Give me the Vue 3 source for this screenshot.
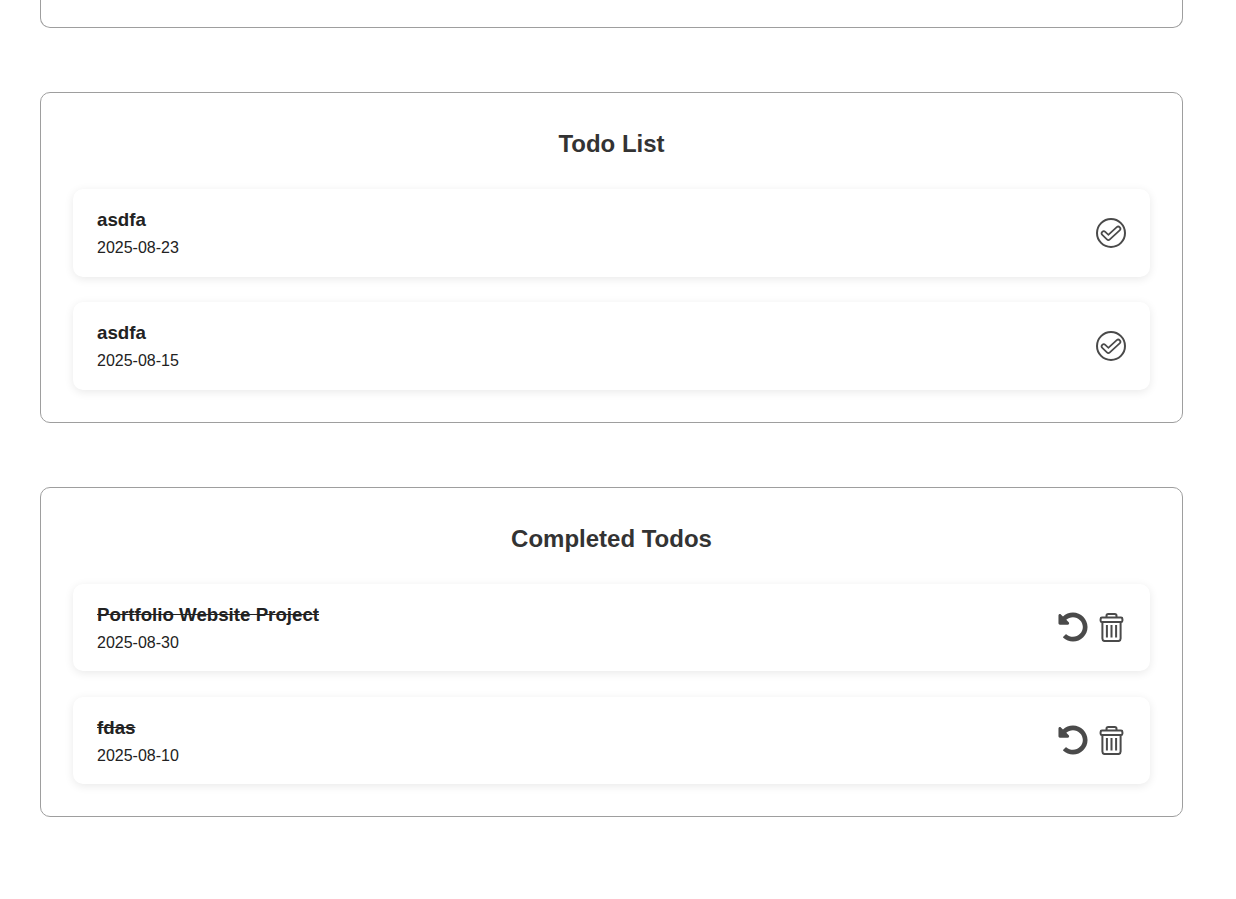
<script setup>
const todos = [
  { id: 1, title: 'asdfa', date: '2025-08-23' },
  { id: 2, title: 'asdfa', date: '2025-08-15' }
]

const completed = [
  { id: 3, title: 'Portfolio Website Project', date: '2025-08-30' },
  { id: 4, title: 'fdas', date: '2025-08-10' }
]
</script>

<template>
  <div class="page">
    <section class="panel panel-cut"></section>

    <section class="panel">
      <h2 class="panel-title">Todo List</h2>
      <ul class="todo-list">
        <li v-for="todo in todos" :key="todo.id" class="todo-item">
          <div class="todo-text">
            <div class="todo-title">{{ todo.title }}</div>
            <div class="todo-date">{{ todo.date }}</div>
          </div>
          <div class="todo-actions">
            <svg width="30" height="30" viewBox="0 0 30 30" fill="none">
              <circle cx="15" cy="15" r="14" stroke="#4a4a4a" stroke-width="2" />
              <path d="M7.8 15.4 12.4 19.8 22.2 10.8" stroke="#4a4a4a" stroke-width="6" stroke-linecap="round" stroke-linejoin="round" />
              <path d="M7.8 15.4 12.4 19.8 22.2 10.8" stroke="#fff" stroke-width="2.6" stroke-linecap="round" stroke-linejoin="round" />
            </svg>
          </div>
        </li>
      </ul>
    </section>

    <section class="panel">
      <h2 class="panel-title">Completed Todos</h2>
      <ul class="todo-list">
        <li v-for="todo in completed" :key="todo.id" class="todo-item">
          <div class="todo-text">
            <div class="todo-title done">{{ todo.title }}</div>
            <div class="todo-date">{{ todo.date }}</div>
          </div>
          <div class="todo-actions">
            <svg width="30" height="30" viewBox="0 0 512 512">
              <path fill="#4a4a4a" d="M255.545 8c-66.269.119-126.438 26.233-170.86 68.685L48.971 40.971C33.851 25.851 8 36.559 8 57.941V192c0 13.255 10.745 24 24 24h134.059c21.382 0 32.09-25.851 16.971-40.971l-41.75-41.75c30.864-28.899 70.801-44.907 113.23-45.273 92.398-.798 170.283 73.977 169.484 169.442C423.236 348.009 349.816 424 256 424c-41.127 0-79.997-14.678-110.63-41.556-4.743-4.161-11.906-3.908-16.368.553L89.34 422.659c-4.872 4.872-4.631 12.815.482 17.433C133.798 479.813 192.074 504 256 504c136.966 0 247.999-111.033 248-247.998C504.001 119.193 392.354 7.755 255.545 8z" />
            </svg>
            <svg width="30" height="30" viewBox="0 0 30 30" fill="none" stroke="#4a4a4a" stroke-width="2">
              <path d="M10.5 5.5V3.8c0-1 .7-1.8 1.7-1.8h6.6c1 0 1.7.8 1.7 1.8v1.7" />
              <rect x="4.6" y="5.5" width="21.8" height="4.6" rx="1.4" />
              <path d="M6.4 10.1v16.4c0 1.6 1 2.6 2.6 2.6h13c1.6 0 2.6-1 2.6-2.6V10.1" />
              <path d="M10.9 13v12.6M15.5 13v12.6M20.1 13v12.6" />
            </svg>
          </div>
        </li>
      </ul>
    </section>
  </div>
</template>

<style>
body {
  background: #fff;
}
</style>

<style scoped>
.page {
  width: 1143px;
  height: 899px;
  margin-left: 40px;
  display: flex;
  flex-direction: column;
  gap: 64px;
  overflow: hidden;
  font-family: "Liberation Sans", Arial, sans-serif;
  color: #222;
}

.panel {
  flex: none;
  box-sizing: border-box;
  border: 1px solid #9e9e9e;
  border-radius: 10px;
  padding: 32px;
}

.panel-cut {
  height: 28px;
  padding: 0;
  border-top: none;
  border-top-left-radius: 0;
  border-top-right-radius: 0;
}

.panel-title {
  margin: 0 0 27px;
  padding-top: 1px;
  height: 36px;
  line-height: 36px;
  font-size: 24px;
  font-weight: 700;
  text-align: center;
  color: #333;
}

.todo-list {
  list-style: none;
  margin: 0;
  padding: 0;
  display: flex;
  flex-direction: column;
  gap: 25.5px;
}

.todo-item {
  box-sizing: border-box;
  height: 87.5px;
  padding: 0 24px;
  display: flex;
  align-items: center;
  justify-content: space-between;
  background: #fff;
  border-radius: 10px;
  box-shadow: 0 2px 10px rgba(0, 0, 0, 0.09);
}

.todo-text {
  padding-top: 2px;
}

.todo-title {
  font-size: 18.72px;
  font-weight: 700;
  line-height: 24px;
  color: #222;
}

.todo-title.done {
  text-decoration: line-through;
}

.todo-date {
  margin-top: 5px;
  font-size: 16px;
  line-height: 22px;
  color: #222;
}

.todo-actions {
  display: flex;
  align-items: center;
  gap: 8px;
}
</style>
